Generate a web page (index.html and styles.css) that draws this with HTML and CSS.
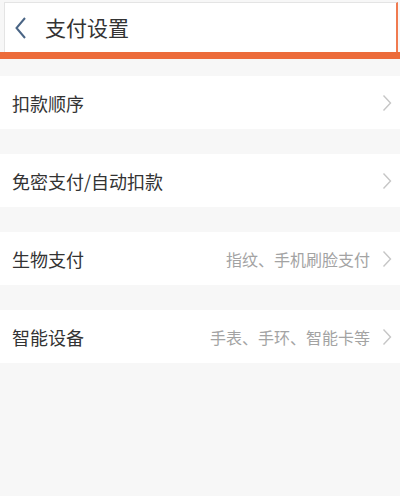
FILE: index.html
```html
<!DOCTYPE html>
<html lang="zh-CN">
<head>
<meta charset="utf-8">
<link rel="stylesheet" href="styles.css">
</head>
<body>
<div class="page">
  <header class="header">
    <div class="header-box">
      <svg class="back" width="14" height="24" viewBox="0 0 14 24"><path d="M11 2 L2.5 12 L11 22" fill="none" stroke="#4a6585" stroke-width="2"/></svg>
      <span class="title">支付设置</span>
    </div>
  </header>
  <div class="list">
    <div class="row"><span class="label">扣款顺序</span><span class="right"><svg class="chev" width="10" height="18" viewBox="0 0 10 18"><path d="M1.5 1.5 L8.5 9 L1.5 16.5" fill="none" stroke="#c6c6c6" stroke-width="1.4"/></svg></span></div>
    <div class="row"><span class="label">免密支付/自动扣款</span><span class="right"><svg class="chev" width="10" height="18" viewBox="0 0 10 18"><path d="M1.5 1.5 L8.5 9 L1.5 16.5" fill="none" stroke="#c6c6c6" stroke-width="1.4"/></svg></span></div>
    <div class="row"><span class="label">生物支付</span><span class="right"><span class="value">指纹、手机刷脸支付</span><svg class="chev" width="10" height="18" viewBox="0 0 10 18"><path d="M1.5 1.5 L8.5 9 L1.5 16.5" fill="none" stroke="#c6c6c6" stroke-width="1.4"/></svg></span></div>
    <div class="row"><span class="label">智能设备</span><span class="right"><span class="value">手表、手环、智能卡等</span><svg class="chev" width="10" height="18" viewBox="0 0 10 18"><path d="M1.5 1.5 L8.5 9 L1.5 16.5" fill="none" stroke="#c6c6c6" stroke-width="1.4"/></svg></span></div>
  </div>
</div>
</body>
</html>
```
FILE: styles.css
```css
html, body {
  margin: 0;
  padding: 0;
  background: #f7f7f7;
}
body {
  font-family: "Noto Sans CJK SC", "Noto Sans", sans-serif;
  width: 400px;
  height: 496px;
  overflow: hidden;
}
.page {
  display: flex;
  flex-direction: column;
}
.header {
  background: #f7f7f7;
  padding: 2px 2px 0 4px;
  border-bottom: 7px solid #ec6b3a;
}
.header-box {
  height: 49px;
  background: #fff;
  border-top: 1px solid #e4e4e4;
  border-left: 1px solid #e4e4e4;
  border-right: 2px solid #f07a4f;
  display: flex;
  align-items: center;
  padding-left: 9px;
}
.back {
  display: block;
  margin-right: 17px;
}
.title {
  font-size: 21px;
  color: #333;
  line-height: 1;
}
.list {
  display: flex;
  flex-direction: column;
  gap: 25px;
  padding-top: 17px;
}
.row {
  height: 53px;
  background: #fff;
  display: flex;
  align-items: center;
  justify-content: space-between;
  padding: 0 8px 0 12px;
}
.label {
  font-size: 18px;
  color: #333;
}
.right {
  display: flex;
  align-items: center;
  gap: 12px;
}
.value {
  font-size: 16px;
  color: #a3a3a3;
}
.chev {
  display: block;
}
```
